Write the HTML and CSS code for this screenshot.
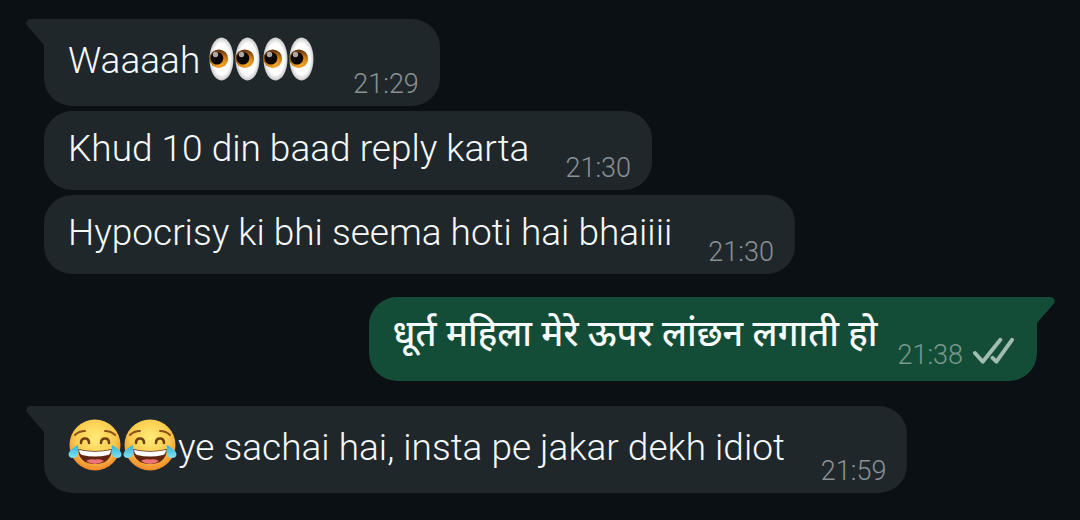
FILE: index.html
```
<!DOCTYPE html>
<html lang="hi-Latn">
<head>
<meta charset="utf-8">
<meta name="viewport" content="width=device-width, initial-scale=1">
<title>Chat</title>
<link rel="stylesheet" href="styles.css">
</head>
<body>
<svg class="defs" aria-hidden="true">
  <defs>
    <radialGradient id="white" cx=".5" cy=".5" r=".5"><stop offset=".72" stop-color="#fff"/><stop offset="1" stop-color="#c9c9cb"/></radialGradient>
    <radialGradient id="iris" cx=".6" cy=".8" r=".85"><stop offset="0" stop-color="#f5aa2c"/><stop offset=".45" stop-color="#d98416"/><stop offset="1" stop-color="#4b2007"/></radialGradient>
    <radialGradient id="face" cx=".5" cy=".36" r=".64"><stop offset="0" stop-color="#ffec78"/><stop offset=".6" stop-color="#fbcb4d"/><stop offset="1" stop-color="#ef872b"/></radialGradient>
    <linearGradient id="tear" x1="0" y1="0" x2="0" y2="1"><stop offset="0" stop-color="#2eb3d8"/><stop offset="1" stop-color="#83e0f0"/></linearGradient>
    <symbol id="eye" viewBox="0 0 25 44">
      <ellipse cx="12.5" cy="22" rx="12" ry="21.5" fill="url(#white)"/>
      <circle cx="9.8" cy="21.7" r="9.3" fill="url(#iris)"/>
      <circle cx="8" cy="21.3" r="6.3" fill="#0b0504"/>
      <circle cx="6.5" cy="17.5" r="2.7" fill="#aaa6a3"/>
    </symbol>
    <symbol id="joy" viewBox="0 0 54 54">
      <circle cx="27" cy="27" r="25.5" fill="url(#face)"/>
      <path d="M7 17Q11 13 17 13M37 13Q43 13 47 17" fill="none" stroke="#8a501c" stroke-width="2" stroke-linecap="round"/>
      <path d="M13 25Q13 20.500 17 20.500T21 25M33 25Q33 20.500 37 20.500T41 25" fill="none" stroke="#70400f" stroke-width="2.600" stroke-linecap="round"/>
      <path d="M10 31Q27 35 44 31Q43 46 27 46Q11 46 10 31Z" fill="#612511"/>
      <path d="M11 32Q27 35.500 43 32Q42.500 36.500 40 37Q27 40 14 37Q11.500 36 11 32Z" fill="#fff"/>
      <path d="M18 43Q21 40.500 27 41.500Q33 40.500 36 43Q32 46 27 46T18 43Z" fill="#ef7476"/>
      <path d="M10 27Q12 39 6 40Q.5 40.500 .5 36Q1 32 10 27Z" fill="url(#tear)"/>
      <path d="M44 27Q42 39 48 40Q53.500 40.500 53.500 36Q53 32 44 27Z" fill="url(#tear)"/>
    </symbol>
    <symbol id="tail" viewBox="0 0 44 27">
      <path d="M44 0H5C1 0-1 4 1.500 7L18 26H44Z" fill="currentColor"/>
    </symbol>
  </defs>
</svg>
<main class="chat">
  <article class="bubble tall">
    <svg class="tail" aria-hidden="true"><use href="#tail"/></svg>
    <p class="text">Waaaah <span class="eyes" role="img" aria-label="eyes"><svg><use href="#eye"/></svg><svg><use href="#eye"/></svg></span><span class="eyes" role="img" aria-label="eyes"><svg><use href="#eye"/></svg><svg><use href="#eye"/></svg></span></p>
    <time>21:29</time>
  </article>
  <article class="bubble">
    <p class="text">Khud 10 din baad reply karta</p>
    <time>21:30</time>
  </article>
  <article class="bubble">
    <p class="text">Hypocrisy ki bhi seema hoti hai bhaiiii</p>
    <time>21:30</time>
  </article>
  <article class="bubble sent">
    <svg class="tail" aria-hidden="true"><use href="#tail"/></svg>
    <p class="text" lang="hi">धूर्त महिला मेरे ऊपर लांछन लगाती हो</p>
    <time>21:38</time>
    <svg class="ticks" viewBox="0 0 42 28" role="img" aria-label="Delivered"><path d="M2 16L10 25L28 2.500M20 21L24 25L40 2.500" fill="none" stroke="currentColor" stroke-width="4" stroke-linecap="round" stroke-linejoin="round"/></svg>
  </article>
  <article class="bubble tall">
    <svg class="tail" aria-hidden="true"><use href="#tail"/></svg>
    <p class="text"><svg class="joy" role="img" aria-label="face with tears of joy"><use href="#joy"/></svg><svg class="joy" role="img" aria-label="face with tears of joy"><use href="#joy"/></svg>ye sachai hai, insta pe jakar dekh idiot</p>
    <time>21:59</time>
  </article>
</main>
</body>
</html>
```
FILE: styles.css
```
* { box-sizing: border-box; }
body {
  margin: 0;
  background: #0b1014;
  color: #f7fafb;
  font-family: Roboto, "Noto Sans", sans-serif;
  font-weight: 350;
}
.defs { position: absolute; width: 0; height: 0; }
.chat {
  display: flex;
  flex-direction: column;
  align-items: flex-start;
  gap: 5px;
  padding: 19px 43px 27px 44px;
}
.bubble {
  position: relative;
  display: flex;
  align-items: flex-end;
  gap: 36px;
  padding: 0 21px 8px 24px;
  border-radius: 28px;
  background: #20272b;
  color: #20272b;
}
.text {
  margin: 0;
  padding: 14px 0 9px;
  color: #f7fafb;
  font-size: 37px;
  line-height: 48px;
}
.tall { border-top-left-radius: 0; }
.tall .text { padding: 18px 0 13px; }
time {
  color: #899195;
  font-size: 27px;
  font-weight: 300;
  line-height: 28px;
}
.tail {
  position: absolute;
  top: 0;
  left: -18px;
  width: 44px;
  height: 27px;
}
.sent {
  align-self: flex-end;
  gap: 20px;
  margin: 18px 0 20px;
  padding-right: 23px;
  border-top-right-radius: 0;
  background: #144d37;
  color: #144d37;
}
.sent .text {
  padding: 12px 0 16px;
  font-family: "Noto Sans", sans-serif;
  font-size: 36px;
  font-weight: 500;
}
.sent time { margin-bottom: 4px; color: #79998c; }
.sent .tail { left: auto; right: -18px; transform: scaleX(-1); }
.ticks {
  width: 41px;
  height: 28px;
  margin: 0 0 8px -10px;
  color: #a1bcb1;
}
.eyes {
  display: inline-flex;
  gap: 1px;
  margin-right: 3px;
  height: 44px;
  vertical-align: -8px;
}
.eyes svg { width: 25px; height: 44px; }
.joy {
  display: inline-block;
  width: 54px;
  height: 54px;
  margin: -8px 1px -8px 0;
  vertical-align: -4px;
}
```
